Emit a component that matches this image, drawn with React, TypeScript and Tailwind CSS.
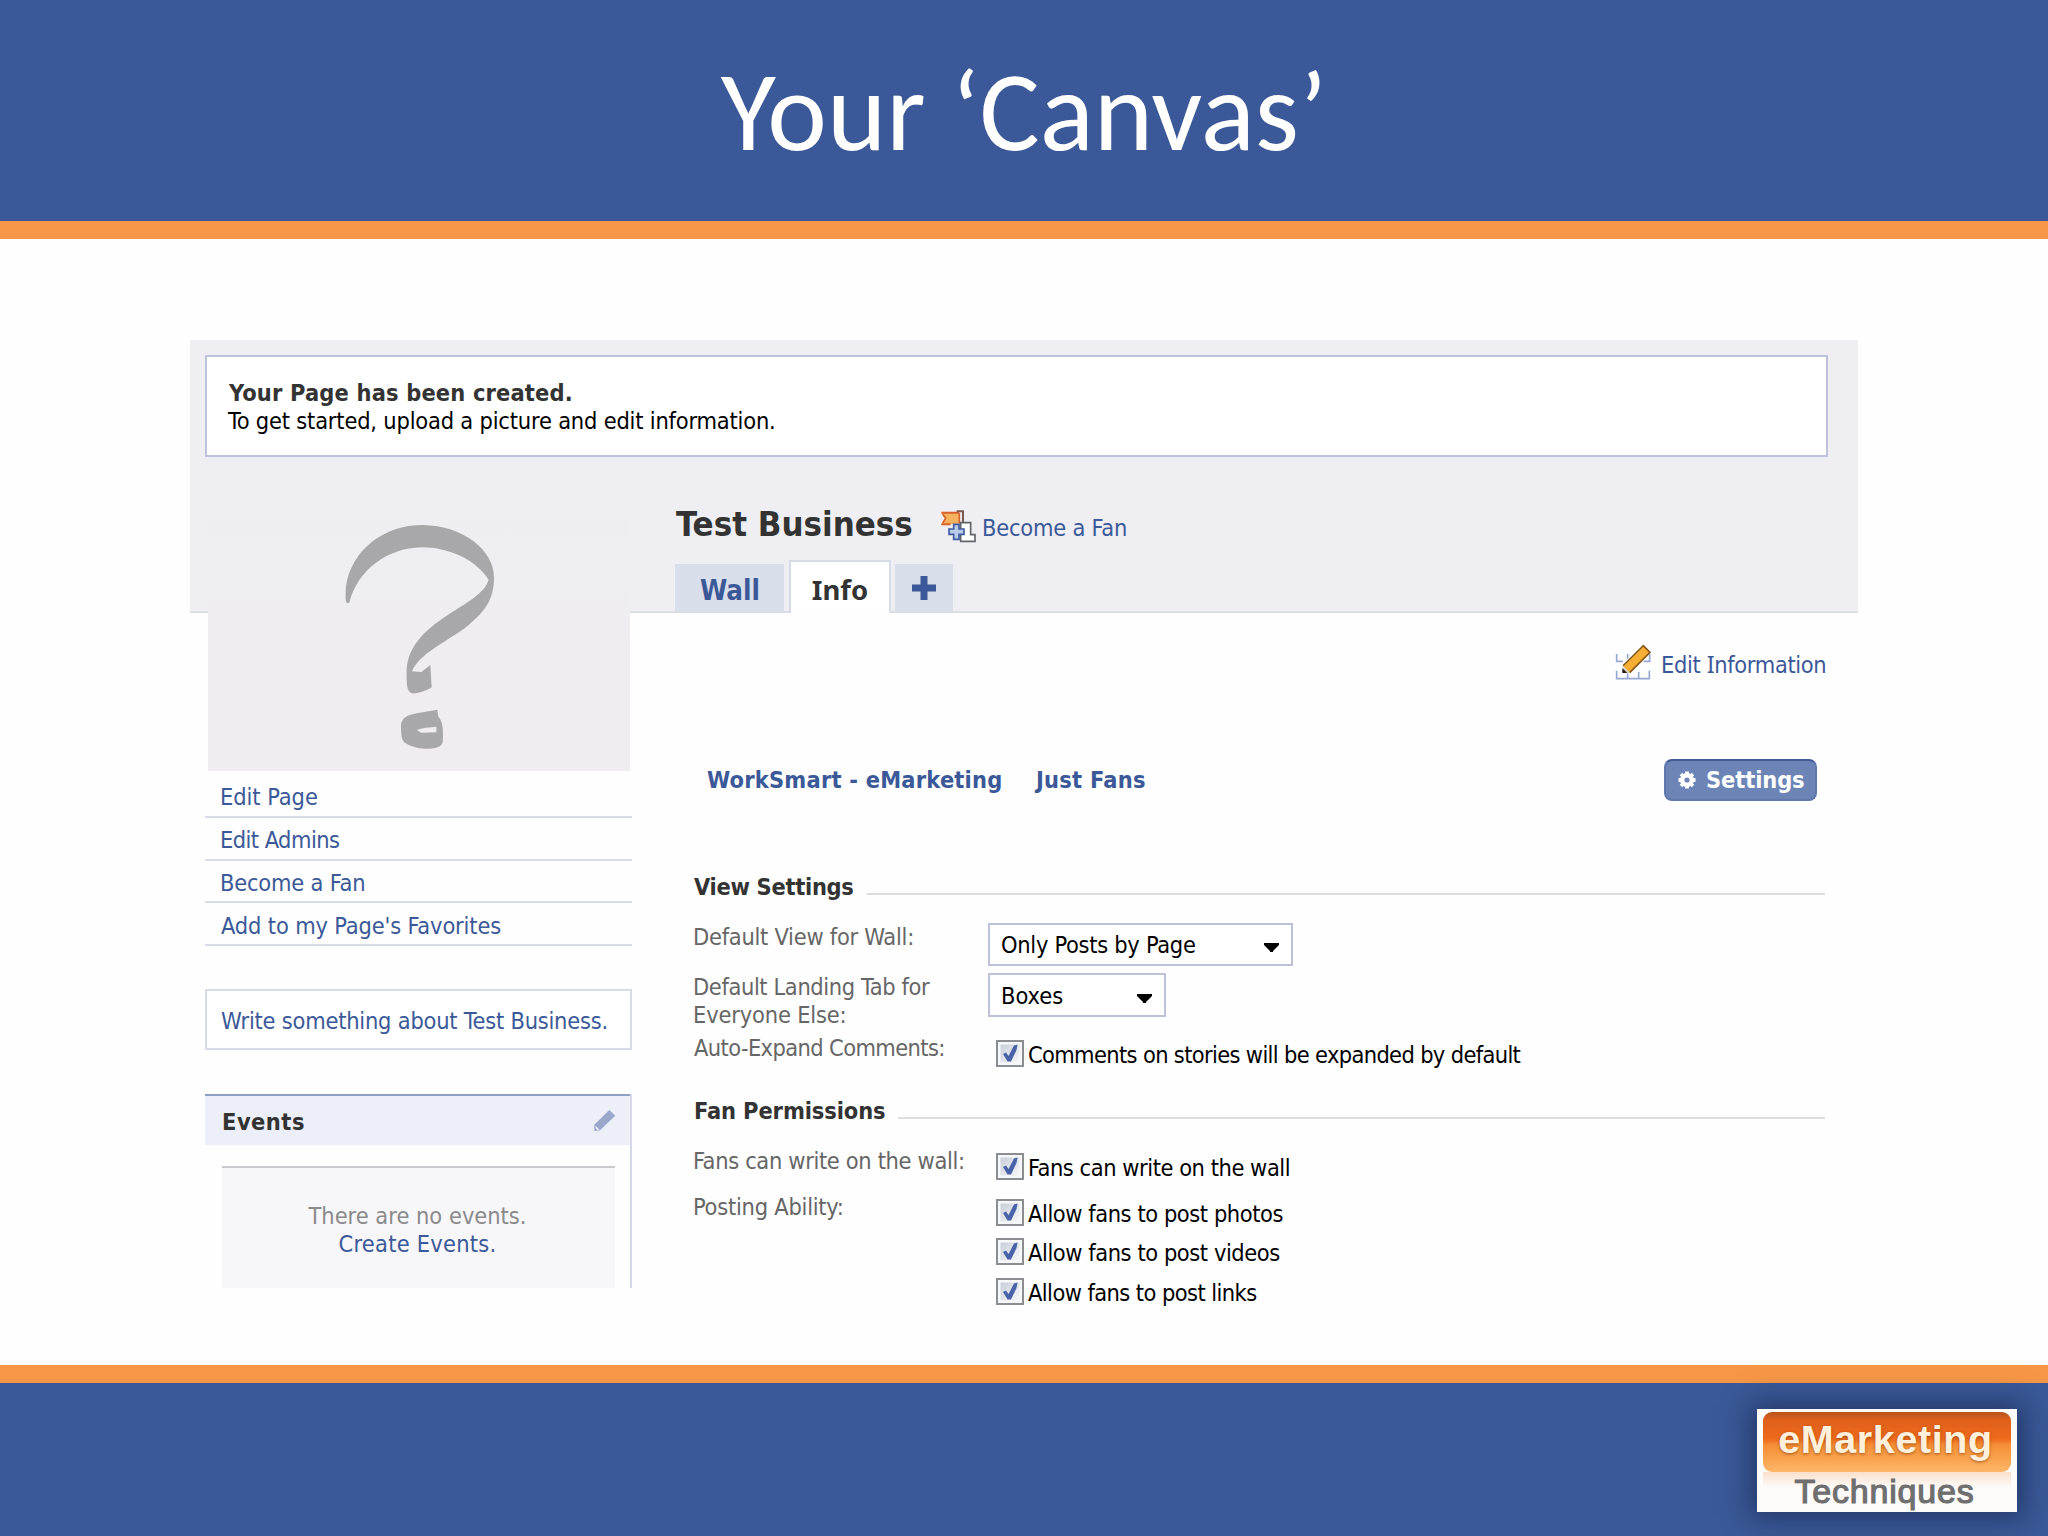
import type { ReactNode } from 'react';

const pageLinks = [
  { label: 'Edit Page', className: 'tracking-[-0.05px]' },
  { label: 'Edit Admins', className: 'tracking-[-0.55px]' },
  { label: 'Become a Fan', className: 'tracking-[-0.2px]' },
  { label: "Add to my Page's Favorites", className: 'tracking-[-0.15px] pl-px' },
];

const postingOptions = [
  { label: 'Allow fans to post photos', className: 'tracking-[-0.43px]' },
  { label: 'Allow fans to post videos', className: 'tracking-[-0.43px]' },
  { label: 'Allow fans to post links', className: 'tracking-[-0.57px]' },
];

function QuestionMark() {
  return (
    <svg width="200" height="271" viewBox="0 0 600 813" fill="#a8a8aa">
      <path d="M82 310C76 308 76 292 78 258C96 148 192 75 308 75C430 77 522 150 522 232C522 292 502 330 440 380C380 425 296 462 276 514L304 516L331 495L335 562C320 572 292 582 275 580C262 574 259 560 260 508C264 440 312 392 380 347C440 308 492 282 506 240C472 182 388 142 305 142C200 144 112 212 88 308Z" />
      <path
        fillRule="evenodd"
        d="M243 675C246 652 262 646 290 640L352 629L355 650C368 662 371 690 368 728C362 742 345 746 318 746C290 746 268 738 252 726C244 718 243 700 243 675ZM290 690C305 684 330 681 349 680L349 697L304 698Z"
      />
    </svg>
  );
}

function FanIcon() {
  return (
    <svg width="35" height="32.67" viewBox="33 30 105 98">
      <path d="M35 38H88V72H35L45 55Z" fill="#f6b25f" />
      <path d="M34 38H88M34 73H62" stroke="#d9622b" strokeWidth="6" />
      <path d="M38 42L47 55L38 69" fill="none" stroke="#d9622b" strokeWidth="5" />
      <path d="M88 40V70" stroke="#d9622b" strokeWidth="5" />
      <path d="M80 34H99V66" fill="none" stroke="#7a5a50" strokeWidth="6" />
      <path d="M92 68H122V104H135V124H92Z" fill="#fff" stroke="#626469" strokeWidth="5" />
      <path
        d="M71 73H87V87H102V103H87V118H71V103H57V87H71Z"
        fill="#b9cbea"
        stroke="#3f5ba0"
        strokeWidth="5"
      />
    </svg>
  );
}

function EditInfoIcon() {
  return (
    <svg width="36" height="36" viewBox="166 72 108 108">
      <g fill="none" stroke="#98a8d2" strokeWidth="5">
        <path d="M171 102V124H190M204 102V116M270 102V124H252" />
        <path d="M171 152V176H269V152M204 160V176M237 156V176" />
      </g>
      <path d="M252 76L270 96L210 158L190 137Z" fill="#f6ae35" />
      <path d="M252 76L190 137" stroke="#7d5217" strokeWidth="4" />
      <path d="M250 76L271 97L210 158" fill="none" stroke="#8a5516" strokeWidth="5" />
      <path d="M190 137L210 158L190 159Z" fill="#d8cbb7" />
      <path d="M188 145L203 159H188Z" fill="#1d1a17" />
    </svg>
  );
}

function PencilIcon() {
  return (
    <svg width="23.3" height="22.7" viewBox="1239 451 70 68" fill="#9ba6cb">
      <path d="M1288 454L1306 471L1260 515L1243 517V498Z" />
      <path d="M1247 502L1258 513L1252 513L1247 508Z" fill="#fff" />
    </svg>
  );
}

function GearIcon() {
  return (
    <svg width="18" height="18" viewBox="0 0 18 18" fill="none" stroke="#fff">
      <circle cx="9" cy="9" r="4.8" strokeWidth="4.4" />
      <path d="M9 0.5V4M9 14V17.5M0.5 9H4M14 9H17.5M3 3L5.5 5.5M12.5 12.5L15 15M3 15L5.5 12.5M12.5 5.5L15 3" strokeWidth="3.8" />
    </svg>
  );
}

function CheckBox() {
  return (
    <svg className="shrink-0" width="28" height="27" viewBox="0 0 28 27">
      <defs>
        <linearGradient id="check-fill" x1="0" y1="0" x2="1" y2="1">
          <stop offset="0" stopColor="#c9cfd8" />
          <stop offset="1" stopColor="#f6f7f9" />
        </linearGradient>
      </defs>
      <rect x="1" y="1" width="26" height="25" fill="#f6f7f8" stroke="#8b8d90" strokeWidth="2" />
      <rect x="4.5" y="4.5" width="19" height="18" fill="url(#check-fill)" />
      <path d="M7 14L10 12.5L12.5 16L18 5.5L21.5 4.5L20.5 10L15 21.5H11.5Z" fill="#4a62a8" />
    </svg>
  );
}

function Select({ className, children }: { className: string; children: ReactNode }) {
  return (
    <div
      className={`flex h-[43.5px] items-center justify-between border-2 border-[#bcc2d8] bg-white pr-3 pl-[11px] text-black ${className}`}
    >
      <span className="pt-[3px]">{children}</span>
      <svg className="mt-[7px]" width="15" height="9" viewBox="0 0 15 9">
        <path d="M0 0H15V2L9 8V9H6V8L0 2Z" fill="#000" />
      </svg>
    </div>
  );
}

function CheckRow({ className, children }: { className: string; children: ReactNode }) {
  return (
    <div className="flex h-[27px] items-center gap-1 pl-2 text-black">
      <CheckBox />
      <span className={`pt-[3px] ${className}`}>{children}</span>
    </div>
  );
}

function SectionTitle({ className, children }: { className: string; children: ReactNode }) {
  return (
    <div className="flex h-7 items-center gap-3 pr-0.5 pl-[19px]">
      <h2 className={`font-bold text-[#333] ${className}`}>{children}</h2>
      <div className="mt-[14px] ml-px h-[2px] flex-1 bg-[#dcdde3]" />
    </div>
  );
}

export default function App() {
  return (
    <div className="flex h-[1536px] w-[2048px] flex-col overflow-hidden bg-[#fefefe] font-['DejaVu_Sans_Condensed','DejaVu_Sans',sans-serif] text-[23.4px] leading-[28px] whitespace-nowrap">
      <header className="flex h-[239px] items-center justify-center border-b-[18px] border-[#f79646] bg-[#3b5998]">
        <h1 className="pt-px font-['Carlito','Lato',sans-serif] text-[113px] leading-[140px] text-white">
          Your ‘Canvas’
        </h1>
      </header>

      <main className="h-[1126px] pt-[101px] pl-[190px]">
        <div className="w-[1668px] bg-[linear-gradient(#eeeef3_271px,#dadce6_271px,#dadce6_273px,transparent_273px)] pt-[15px] pl-[15px]">
          <div className="h-[102px] w-[1623px] border-2 border-[#bdc3da] bg-white pt-[22px] pl-[22px]">
            <p className="font-bold tracking-[0.16px] text-[#333]">Your Page has been created.</p>
            <p className="-ml-px tracking-[-0.19px] text-black">
              To get started, upload a picture and edit information.
            </p>
          </div>

          <div className="flex items-start">
            <aside className="w-[427px] text-[#3b5998]">
              <div className="mt-[23px] ml-[3px] h-[291px] w-[422px] bg-[linear-gradient(#eeeef3,#efedf0_60%)] pt-5 pl-28">
                <QuestionMark />
              </div>

              <ul className="mt-1">
                {pageLinks.map((link) => (
                  <li
                    key={link.label}
                    className="flex h-[42.8px] items-center border-b-2 border-[#d8dce8] pt-[4px] pl-[15px]"
                  >
                    <span className={link.className}>{link.label}</span>
                  </li>
                ))}
              </ul>

              <div className="mt-[43px] flex h-[61px] items-center border-2 border-[#d8dbe6] bg-white pt-[3px] pl-[14px] tracking-[-0.22px]">
                Write something about Test Business.
              </div>

              <div className="mt-11 h-[194px] border-r-2 border-[#d4d8e8]">
                <div className="flex h-[51px] items-center justify-between border-t-2 border-[#8e9fc6] bg-[#eceff7] pr-[14px] pl-[17px]">
                  <h2 className="pt-[3px] font-bold tracking-[0.5px] text-[#333]">Events</h2>
                  <PencilIcon />
                </div>
                <div className="mt-[21px] ml-[17px] h-[122px] w-[393px] border-t-2 border-[#c8cacd] bg-[#f7f6f9] pt-[34px] pr-[2px] text-center">
                  <p className="text-[#8a8a8a]">There are no events.</p>
                  <p className="tracking-[0.25px]">Create Events.</p>
                </div>
              </div>
            </aside>

            <section className="ml-[43px] w-[1152px] pt-[43px]">
              <div className="flex h-12 items-center">
                <h1 className="w-[266px] pl-px text-[34.5px] font-bold text-[#333]">Test Business</h1>
                <div className="pt-[5px]">
                  <FanIcon />
                </div>
                <span className="pt-[7px] pl-[6px] tracking-[-0.22px] text-[#3b5998]">Become a Fan</span>
              </div>

              <div className="mt-3 flex h-[53px] items-end text-[27.5px] font-bold">
                <div className="mb-[2px] flex h-[47px] w-[109px] items-center justify-center bg-[#d9dfea] pt-[5px] pl-px text-[#3b5998]">
                  Wall
                </div>
                <div className="ml-[5px] flex h-[53px] w-[102px] items-center justify-center border-2 border-b-0 border-[#d8dce8] bg-white pt-1 font-['Noto_Sans',sans-serif] text-[#333]">
                  Info
                </div>
                <div className="mb-[2px] ml-1 flex h-[47px] w-[58px] items-center justify-center bg-[#d9dfea] pt-px">
                  <svg width="24" height="24" viewBox="0 0 24 24">
                    <path d="M8.5 0H15.5V8.5H24V15.5H15.5V24H8.5V15.5H0V8.5H8.5Z" fill="#3b5998" />
                  </svg>
                </div>
              </div>

              <div className="mt-[31px] flex h-9 items-center gap-[10px] pl-[940px] text-[#3b5998]">
                <EditInfoIcon />
                <span className="pt-1 tracking-[-0.35px]">
                  Edit <span className="font-['Noto_Sans',sans-serif]">I</span>nformation
                </span>
              </div>

              <div className="mt-[79px] flex h-[42px] items-center pr-[10px] pl-[32px] font-bold text-[#3b5998]">
                <span className="w-[329px] tracking-[0.2px]">WorkSmart - eMarketing</span>
                <span className="tracking-[0.25px]">Just Fans</span>
                <div className="ml-auto flex h-[42px] w-[153px] items-center gap-[10px] rounded-lg border-2 border-[#6078ae] border-t-[#415b97] bg-[#6d84b6] pl-3 text-white">
                  <GearIcon />
                  <span className="tracking-[-0.1px]">Settings</span>
                </div>
              </div>

              <div className="mt-[72px]">
                <SectionTitle className="tracking-[-0.3px]">View Settings</SectionTitle>
                <div className="mt-[21.5px] flex h-[50.5px] leading-[27.5px] text-[#666]">
                  <span className="w-[313px] pt-px pl-[18px] tracking-[-0.26px]">Default View for Wall:</span>
                  <Select className="w-[305px] tracking-[-0.29px]">Only Posts by Page</Select>
                </div>
                <div className="flex h-[61px] leading-[27.5px] text-[#666]">
                  <div className="w-[313px] pt-px pl-[18px]">
                    <p className="tracking-[-0.38px]">Default Landing Tab for</p>
                    <p className="tracking-[-0.16px]">Everyone Else:</p>
                  </div>
                  <Select className="w-[178px]">Boxes</Select>
                </div>
                <div className="flex h-[62.5px] text-[#666]">
                  <span className="w-[313px] pl-[19px] tracking-[-0.6px]">Auto-Expand Comments:</span>
                  <div className="pt-[5.5px]">
                    <CheckRow className="tracking-[-0.65px]">
                      Comments on stories will be expanded by default
                    </CheckRow>
                  </div>
                </div>

                <SectionTitle className="tracking-[-0.1px]">Fan Permissions</SectionTitle>
                <div className="mt-[22.5px] flex h-[46px] text-[#666]">
                  <span className="w-[313px] pl-[18px] tracking-[-0.34px]">Fans can write on the wall:</span>
                  <div className="pt-[5.5px]">
                    <CheckRow className="tracking-[-0.45px]">Fans can write on the wall</CheckRow>
                  </div>
                </div>
                <div className="flex text-[#666]">
                  <span className="w-[313px] pl-[18px] tracking-[-0.24px]">Posting Ability:</span>
                  <div className="flex flex-col gap-[12.7px] pt-[5.5px]">
                    {postingOptions.map((option) => (
                      <CheckRow key={option.label} className={option.className}>
                        {option.label}
                      </CheckRow>
                    ))}
                  </div>
                </div>
              </div>
            </section>
          </div>
        </div>
      </main>

      <footer className="flex h-[171px] justify-end border-t-[18px] border-[#f79646] bg-[#3b5998] pt-[26px] pr-[31px] font-['Liberation_Sans',Arial,sans-serif]">
        <div className="flex h-[103px] w-[260px] flex-col items-center bg-[#fdfcfb] pt-[3px] shadow-[0_0_26px_6px_rgba(22,38,78,0.65)]">
          <div className="flex h-[60px] w-[248px] items-center justify-center rounded-[9px] bg-[linear-gradient(#b8541c_0%,#e0601c_14%,#ee6a1c_45%,#f58f35_55%,#fdb668_100%)] pr-[3px] pb-[6px]">
            <span className="text-[39.5px] font-bold tracking-[0.6px] text-[#fff0dc] [text-shadow:0_1px_3px_rgba(130,60,10,0.7)]">
              eMarketing
            </span>
          </div>
          <div className="flex h-[40px] w-[248px] items-center justify-center bg-[linear-gradient(#fbe0cb,#fdfcfb_40%)] pr-[5px] pb-[3px]">
            <span className="text-[34px] tracking-[0.8px] text-[#6f6f70] [-webkit-text-stroke:1.2px_#6f6f70]">
              Techniques
            </span>
          </div>
        </div>
      </footer>
    </div>
  );
}
